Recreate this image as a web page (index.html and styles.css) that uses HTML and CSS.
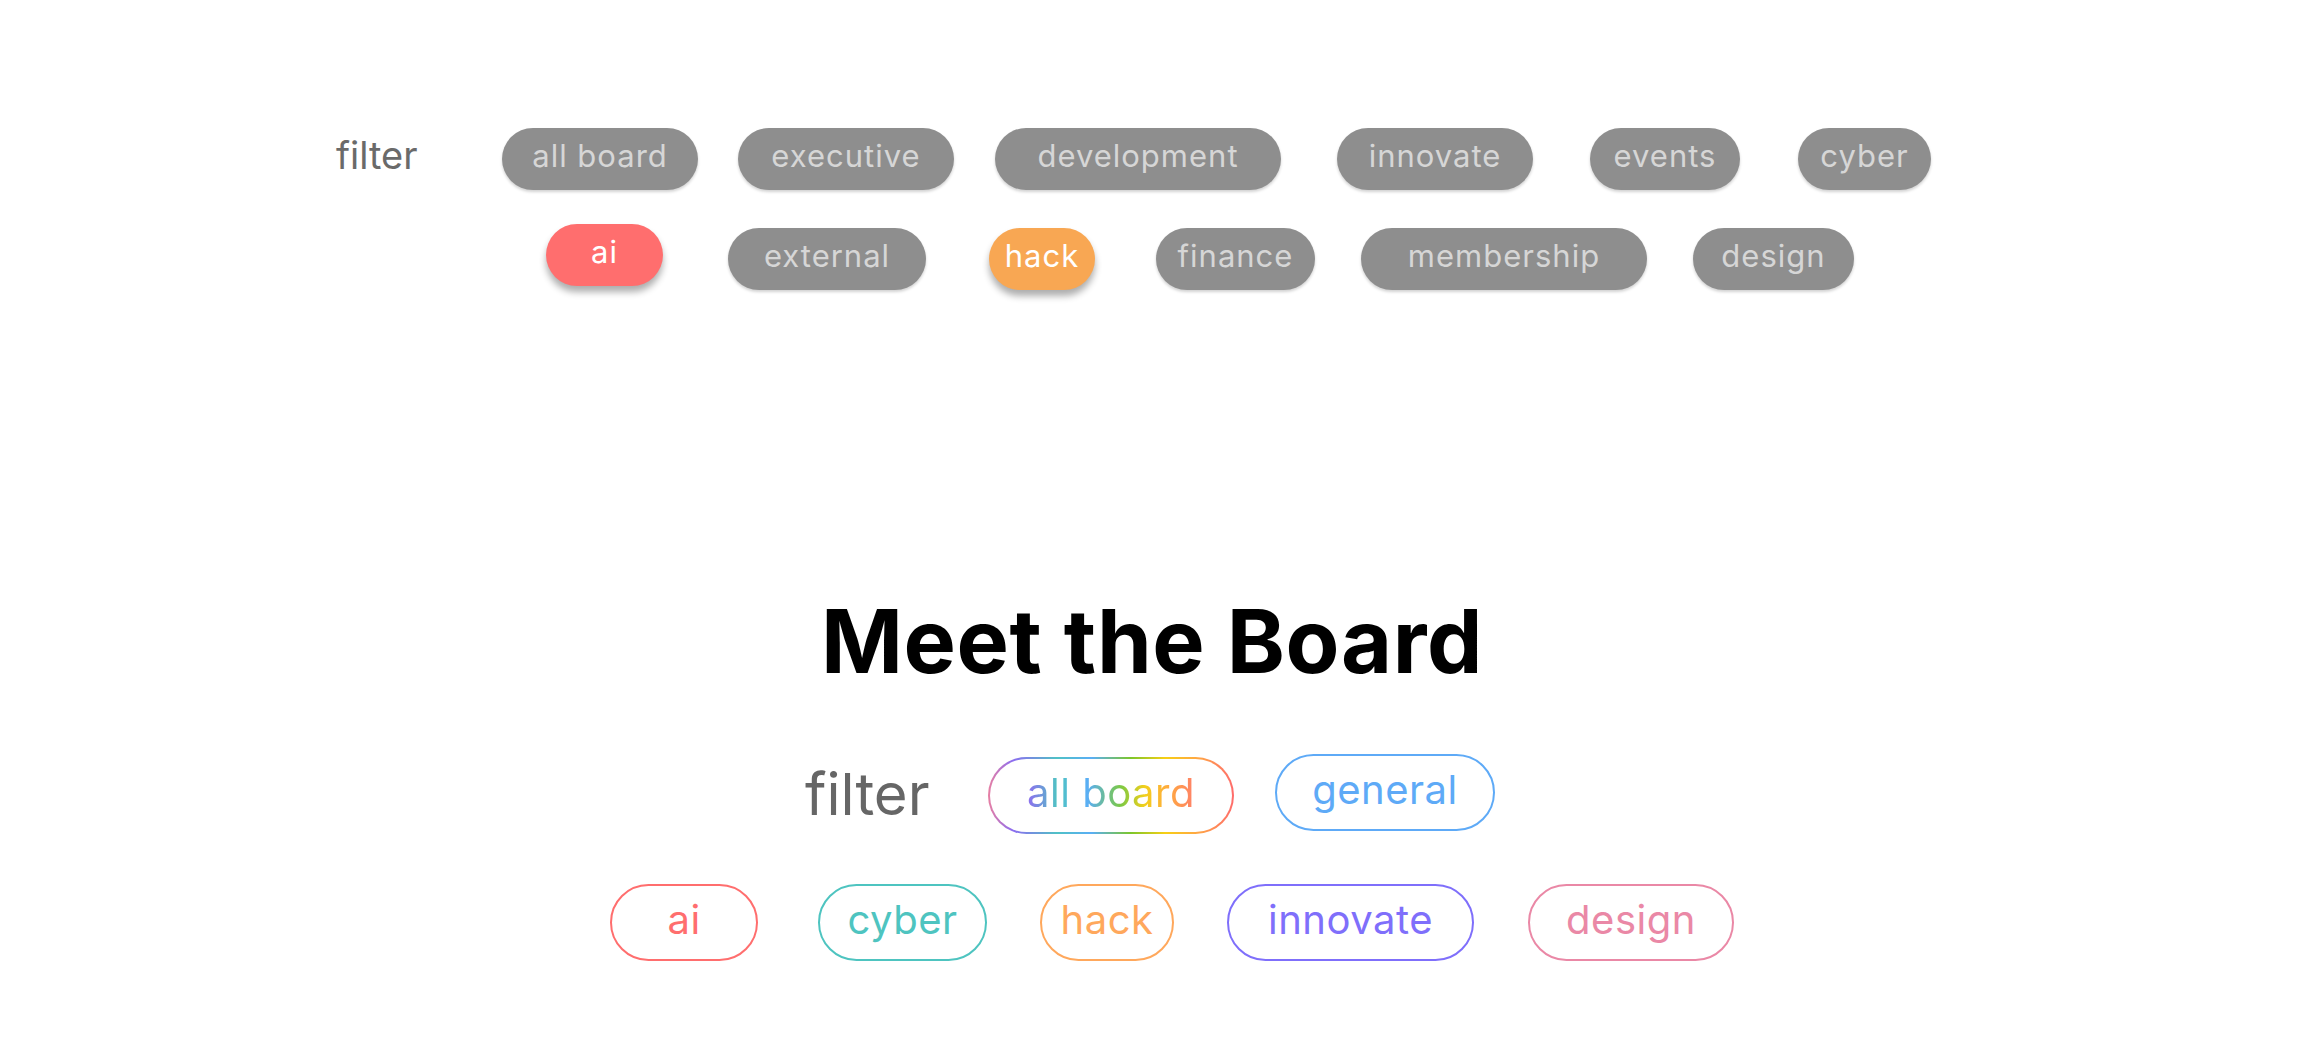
FILE: index.html
```html
<!DOCTYPE html>
<html lang="en">
<head>
<meta charset="utf-8">
<title>Meet the Board</title>
<link rel="stylesheet" href="styles.css">
</head>
<body>
<section class="legacy-filter">
  <div class="tf-row tf-row-1">
    <span class="tf-label">filter</span>
    <span class="tchip t-all">all board</span>
    <span class="tchip t-exec">executive</span>
    <span class="tchip t-dev">development</span>
    <span class="tchip t-inn">innovate</span>
    <span class="tchip t-evt">events</span>
    <span class="tchip t-cyb">cyber</span>
  </div>
  <div class="tf-row tf-row-2">
    <span class="tchip t-ai is-active">ai</span>
    <span class="tchip t-ext">external</span>
    <span class="tchip t-hack is-active">hack</span>
    <span class="tchip t-fin">finance</span>
    <span class="tchip t-mem">membership</span>
    <span class="tchip t-des">design</span>
  </div>
</section>

<section class="board">
  <h1 class="board-title">Meet the Board</h1>
  <div class="bf-row bf-row-1">
    <span class="bf-label">filter</span>
    <span class="bchip b-all"><span class="rainbow-text">all board</span></span>
    <span class="bchip b-gen">general</span>
  </div>
  <div class="bf-row bf-row-2">
    <span class="bchip b-ai">ai</span>
    <span class="bchip b-cyb">cyber</span>
    <span class="bchip b-hack">hack</span>
    <span class="bchip b-inn">innovate</span>
    <span class="bchip b-des">design</span>
  </div>
</section>
</body>
</html>
```
FILE: styles.css
```css
html, body {
  margin: 0;
  padding: 0;
  background: #ffffff;
}

body {
  width: 2304px;
  height: 1064px;
  overflow: hidden;
  font-family: Inter, "Open Sans", sans-serif;
}

/* ---------- legacy (grey) filter ---------- */
.legacy-filter {
  padding-top: 128px;
}

.tf-row {
  display: flex;
  align-items: flex-start;
}

.tf-row-1 {
  padding-left: 336px;
  height: 63px;
}

.tf-row-2 {
  padding-left: 546px;
  margin-top: 37px;
  height: 63px;
}

.tf-label {
  width: 166px;
  flex: none;
  font-size: 38px;
  line-height: 1;
  margin-top: 8px;
  color: #6a6a6a;
}

.tchip {
  flex: none;
  height: 62px;
  border-radius: 31px;
  background: #8e8e8e;
  color: #d6d6d6;
  font-size: 31px;
  letter-spacing: 1px;
  display: flex;
  align-items: center;
  justify-content: center;
  box-shadow: 0 2px 3px rgba(0, 0, 0, 0.18);
  box-sizing: border-box;
  padding-bottom: 7px;
}

.tchip.is-active {
  color: #ffffff;
  box-shadow: 0 6px 7px rgba(0, 0, 0, 0.32);
}

.t-all  { width: 196px; }
.t-exec { width: 216px; margin-left: 40px; }
.t-dev  { width: 286px; margin-left: 41px; }
.t-inn  { width: 196px; margin-left: 56px; }
.t-evt  { width: 150px; margin-left: 57px; }
.t-cyb  { width: 133px; margin-left: 58px; }

.t-ai   { width: 117px; background: #ff6e6e; margin-top: -4px; }
.t-ext  { width: 198px; margin-left: 65px; }
.t-hack { width: 106px; margin-left: 63px; background: #f8a753; }
.t-fin  { width: 159px; margin-left: 61px; }
.t-mem  { width: 286px; margin-left: 46px; }
.t-des  { width: 161px; margin-left: 46px; }

/* ---------- Meet the Board ---------- */
.board {
  margin-top: 306px;
}

.board-title {
  margin: 0;
  text-align: center;
  font-size: 88px;
  line-height: 88px;
  font-weight: 700;
  color: #000000;
  letter-spacing: 0.6px;
}

.bf-row {
  display: flex;
  align-items: flex-start;
}

.bf-row-1 {
  padding-left: 805px;
  margin-top: 69px;
}

.bf-row-2 {
  padding-left: 610px;
  margin-top: 50px;
}

.bf-label {
  width: 183px;
  flex: none;
  font-size: 58px;
  line-height: 1;
  margin-top: 11px;
  color: #666666;
}

.bchip {
  flex: none;
  height: 77px;
  border-radius: 39px;
  border: 2px solid currentColor;
  box-sizing: border-box;
  font-size: 40px;
  letter-spacing: 0.5px;
  display: flex;
  align-items: center;
  justify-content: center;
  padding-bottom: 7px;
  background: #ffffff;
}

.b-all {
  width: 246px;
  margin-top: 3px;
  border-color: transparent;
  background:
    linear-gradient(#ffffff, #ffffff) padding-box,
    linear-gradient(90deg, #e87fa2 0%, #8c6cf0 10%, #4fc1c6 28%, #5aaef5 42%, #7cc62a 58%, #f7cf14 72%, #ffa447 86%, #ff6b6b 100%) border-box;
}

.rainbow-text {
  background: linear-gradient(90deg, #8f6cf0 0%, #4fc3c3 18%, #5aaef5 36%, #7cc943 56%, #f3d01c 70%, #ffaa3e 84%, #ff7f6a 100%);
  -webkit-background-clip: text;
  background-clip: text;
  color: transparent;
}

.b-gen  { width: 220px; margin-left: 41px; color: #5eaaf7; }

.b-ai   { width: 148px; color: #ff6e6e; }
.b-cyb  { width: 169px; margin-left: 60px; color: #4ec4c0; }
.b-hack { width: 134px; margin-left: 53px; color: #ffa85c; }
.b-inn  { width: 247px; margin-left: 53px; color: #7f6ffb; }
.b-des  { width: 206px; margin-left: 54px; color: #ea88a6; }
```
